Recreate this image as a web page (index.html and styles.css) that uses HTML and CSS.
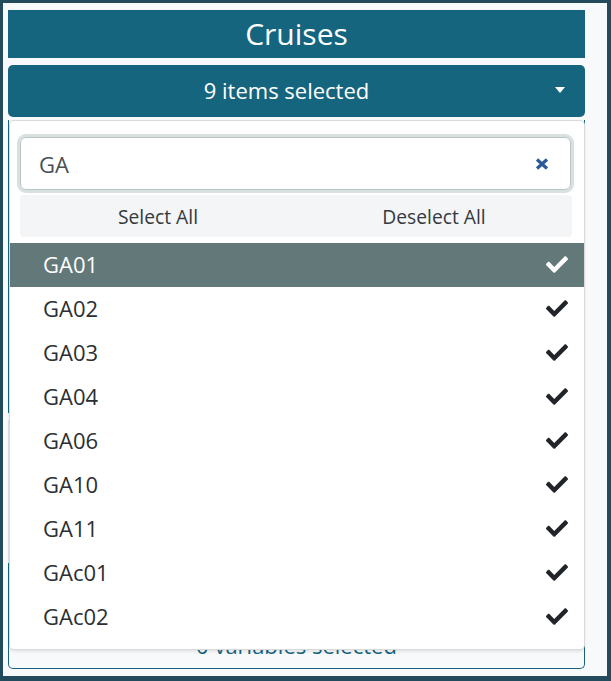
FILE: index.html
```html
<!DOCTYPE html>
<html lang="en">
<head>
<meta charset="utf-8">
<title>Cruises</title>
<link rel="stylesheet" href="styles.css">
</head>
<body>
<div class="page">
  <div class="title">Cruises</div>
  <div class="picker">
    <button class="toggle" type="button"><span class="toggle-text">9 items selected</span><span class="caret"></span></button>
    <div class="menu">
      <div class="search">
        <span class="search-text">GA</span>
        <svg class="clear" width="14" height="12" viewBox="0 0 14 12"><path d="M2 1.5 L12 10.5 M12 1.5 L2 10.5" stroke="#2b5a98" stroke-width="3.2" fill="none"/></svg>
      </div>
      <div class="actions">
        <button class="action" type="button">Select All</button>
        <button class="action" type="button">Deselect All</button>
      </div>
      <ul class="options">
        <li class="option active"><span>GA01</span><svg class="check" viewBox="0 64 512 384"><path d="M173.898 439.404l-166.4-166.4c-9.997-9.997-9.997-26.206 0-36.204l36.203-36.204c9.997-9.998 26.207-9.998 36.204 0L192 312.690 432.095 72.596c9.997-9.997 26.207-9.997 36.204 0l36.203 36.204c9.997 9.997 9.997 26.206 0 36.204l-294.4 294.401c-9.998 9.997-26.207 9.997-36.204-.001z"/></svg></li>
        <li class="option"><span>GA02</span><svg class="check" viewBox="0 64 512 384"><path d="M173.898 439.404l-166.4-166.4c-9.997-9.997-9.997-26.206 0-36.204l36.203-36.204c9.997-9.998 26.207-9.998 36.204 0L192 312.690 432.095 72.596c9.997-9.997 26.207-9.997 36.204 0l36.203 36.204c9.997 9.997 9.997 26.206 0 36.204l-294.4 294.401c-9.998 9.997-26.207 9.997-36.204-.001z"/></svg></li>
        <li class="option"><span>GA03</span><svg class="check" viewBox="0 64 512 384"><path d="M173.898 439.404l-166.4-166.4c-9.997-9.997-9.997-26.206 0-36.204l36.203-36.204c9.997-9.998 26.207-9.998 36.204 0L192 312.690 432.095 72.596c9.997-9.997 26.207-9.997 36.204 0l36.203 36.204c9.997 9.997 9.997 26.206 0 36.204l-294.4 294.401c-9.998 9.997-26.207 9.997-36.204-.001z"/></svg></li>
        <li class="option"><span>GA04</span><svg class="check" viewBox="0 64 512 384"><path d="M173.898 439.404l-166.4-166.4c-9.997-9.997-9.997-26.206 0-36.204l36.203-36.204c9.997-9.998 26.207-9.998 36.204 0L192 312.690 432.095 72.596c9.997-9.997 26.207-9.997 36.204 0l36.203 36.204c9.997 9.997 9.997 26.206 0 36.204l-294.4 294.401c-9.998 9.997-26.207 9.997-36.204-.001z"/></svg></li>
        <li class="option"><span>GA06</span><svg class="check" viewBox="0 64 512 384"><path d="M173.898 439.404l-166.4-166.4c-9.997-9.997-9.997-26.206 0-36.204l36.203-36.204c9.997-9.998 26.207-9.998 36.204 0L192 312.690 432.095 72.596c9.997-9.997 26.207-9.997 36.204 0l36.203 36.204c9.997 9.997 9.997 26.206 0 36.204l-294.4 294.401c-9.998 9.997-26.207 9.997-36.204-.001z"/></svg></li>
        <li class="option"><span>GA10</span><svg class="check" viewBox="0 64 512 384"><path d="M173.898 439.404l-166.4-166.4c-9.997-9.997-9.997-26.206 0-36.204l36.203-36.204c9.997-9.998 26.207-9.998 36.204 0L192 312.690 432.095 72.596c9.997-9.997 26.207-9.997 36.204 0l36.203 36.204c9.997 9.997 9.997 26.206 0 36.204l-294.4 294.401c-9.998 9.997-26.207 9.997-36.204-.001z"/></svg></li>
        <li class="option"><span>GA11</span><svg class="check" viewBox="0 64 512 384"><path d="M173.898 439.404l-166.4-166.4c-9.997-9.997-9.997-26.206 0-36.204l36.203-36.204c9.997-9.998 26.207-9.998 36.204 0L192 312.690 432.095 72.596c9.997-9.997 26.207-9.997 36.204 0l36.203 36.204c9.997 9.997 9.997 26.206 0 36.204l-294.4 294.401c-9.998 9.997-26.207 9.997-36.204-.001z"/></svg></li>
        <li class="option"><span>GAc01</span><svg class="check" viewBox="0 64 512 384"><path d="M173.898 439.404l-166.4-166.4c-9.997-9.997-9.997-26.206 0-36.204l36.203-36.204c9.997-9.998 26.207-9.998 36.204 0L192 312.690 432.095 72.596c9.997-9.997 26.207-9.997 36.204 0l36.203 36.204c9.997 9.997 9.997 26.206 0 36.204l-294.4 294.401c-9.998 9.997-26.207 9.997-36.204-.001z"/></svg></li>
        <li class="option"><span>GAc02</span><svg class="check" viewBox="0 64 512 384"><path d="M173.898 439.404l-166.4-166.4c-9.997-9.997-9.997-26.206 0-36.204l36.203-36.204c9.997-9.998 26.207-9.998 36.204 0L192 312.690 432.095 72.596c9.997-9.997 26.207-9.997 36.204 0l36.203 36.204c9.997 9.997 9.997 26.206 0 36.204l-294.4 294.401c-9.998 9.997-26.207 9.997-36.204-.001z"/></svg></li>
      </ul>
    </div>
  </div>
  <div class="panel panel-a"></div>
  <div class="panel panel-b"></div>
  <div class="panel panel-c"><span>0 variables selected</span></div>
</div>
</body>
</html>
```
FILE: styles.css
```css
* { box-sizing: border-box; }
html, body { margin: 0; }
body {
  background: #234b5c;
  padding: 3px 4px 5px 3px;
  height: 681px;
  overflow: hidden;
  font-family: "Open Sans", "Liberation Sans", sans-serif;
}
.page {
  background: #f8f9fa;
  height: 673px;
  padding: 7px 22px 0 5px;
  display: flex;
  flex-direction: column;
}
.title {
  height: 48px;
  background: #16657f;
  color: #fff;
  font-size: 30px;
  line-height: 48px;
  text-align: center;
}
.picker {
  position: relative;
  margin-top: 7px;
}
.toggle {
  display: flex;
  align-items: center;
  width: 100%;
  height: 52px;
  border: none;
  border-radius: 5px;
  background: #16657f;
  color: #fff;
  font-family: inherit;
  font-size: 22px;
  padding: 0 20px 3px 12px;
}
.toggle-text { flex: 1; text-align: center; padding-right: 2px; }
.caret {
  width: 0;
  height: 0;
  border-left: 5px solid transparent;
  border-right: 5px solid transparent;
  border-top: 6px solid #fff;
}
.menu {
  position: absolute;
  top: calc(100% + 3px);
  left: 1px;
  right: 0;
  z-index: 10;
  background: #fff;
  border: 1px solid rgba(0, 0, 0, 0.15);
  border-radius: 5px;
  box-shadow: 0 2px 3px rgba(0, 0, 0, 0.08);
  padding: 16px 0 10px;
}
.search {
  margin: 0 13px 0 10px;
  height: 53px;
  border: 1px solid #bac5c5;
  border-radius: 6px;
  box-shadow: 0 0 0 3px #d9e0e0;
  display: flex;
  align-items: center;
  justify-content: space-between;
  padding: 0 21px 0 18px;
  font-size: 22px;
  color: #495057;
}
.clear { display: block; }
.actions {
  margin: 5px 12px 0 10px;
  height: 42px;
  background: #f4f5f7;
  border-radius: 4px;
  display: grid;
  grid-template-columns: 1fr 1fr;
}
.action {
  border: none;
  background: transparent;
  font-family: inherit;
  font-size: 19.25px;
  color: #333a40;
  padding: 0;
}
.options {
  list-style: none;
  margin: 6px 0 0;
  padding: 0;
}
.option {
  height: 44px;
  display: flex;
  align-items: center;
  justify-content: space-between;
  padding: 0 16px 2px 33px;
  font-size: 22px;
  color: #2b2f33;
}
.option.active {
  background: #637878;
  color: #fff;
}
.check {
  width: 22px;
  height: 17px;
  fill: #212529;
}
.option.active .check { fill: #fff; }
.panel { flex: none; }
.panel-a {
  margin-top: 3px;
  height: 293px;
  border-left: 1px solid #16657f;
  border-right: 1px solid #16657f;
}
.panel-b {
  margin-top: 7px;
  height: 143px;
  border-left: 1px solid #dee2e6;
  border-right: 1px solid #dee2e6;
}
.panel-c {
  height: 106px;
  border: 1px solid #16657f;
  border-top: none;
  border-radius: 0 0 5px 5px;
  display: flex;
  align-items: flex-end;
  justify-content: center;
  padding-bottom: 8px;
  color: #16657f;
  font-size: 22px;
  line-height: 30px;
}
```
